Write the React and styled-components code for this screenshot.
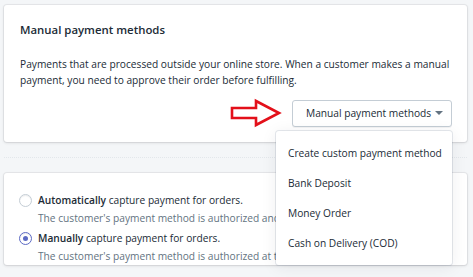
import React from "react";
import styled, { createGlobalStyle } from "styled-components";

const GlobalStyle = createGlobalStyle`
  body {
    margin: 0;
    background: #f4f6f8;
    font-family: "Open Sans", "Noto Sans", sans-serif;
    color: #212b36;
  }
`;

const Page = styled.div`
  width: 473px;
  height: 277px;
  padding: 5px 6px 0 4px;
  box-sizing: border-box;
  overflow: hidden;
`;

const Card = styled.div`
  background: #fff;
  border-radius: 3px;
  box-shadow: 0 0 0 1px rgba(63, 63, 68, 0.07), 0 1px 3px 0 rgba(63, 63, 68, 0.15);
  height: ${(props) => props.height}px;
  box-sizing: border-box;
  padding: ${(props) => props.pad};
`;

const Heading = styled.h2`
  margin: 0;
  font-size: 11.4px;
  font-weight: 600;
  line-height: 18px;
`;

const Text = styled.p`
  margin: 17px 0 0;
  font-size: 10.2px;
  line-height: 16px;
  white-space: nowrap;
`;

const Actions = styled.div`
  display: flex;
  justify-content: flex-end;
  align-items: center;
  gap: 10px;
  margin-top: 10px;
  padding-right: 15px;
`;

const MenuWrap = styled.div`
  position: relative;
`;

const Button = styled.button`
  height: 27px;
  width: 160px;
  padding: 0 8px 0 13px;
  display: flex;
  align-items: center;
  justify-content: space-between;
  background: #fff;
  border: 1px solid #c4cdd5;
  border-radius: 3px;
  box-shadow: 0 1px 0 rgba(22, 29, 37, 0.05);
  font-family: inherit;
  font-size: 10.2px;
  color: #212b36;
  white-space: nowrap;
`;

const Caret = styled.span`
  width: 0;
  height: 0;
  border-left: 4px solid transparent;
  border-right: 4px solid transparent;
  border-top: 4px solid #637381;
`;

const Menu = styled.ul`
  position: absolute;
  top: 31px;
  right: 0;
  width: 176px;
  margin: 0;
  padding: 7px 0;
  list-style: none;
  background: #fff;
  border-radius: 3px;
  box-shadow: 0 0 0 1px rgba(6, 44, 82, 0.1), 0 2px 16px rgba(33, 43, 54, 0.08);
  z-index: 2;
`;

const MenuItem = styled.li`
  height: 30px;
  line-height: 30px;
  padding: 0 12px;
  font-size: 10.2px;
  white-space: nowrap;
`;

const Band = styled.div`
  height: 31px;
  display: flex;
  align-items: center;
`;

const Divider = styled.div`
  flex: 1;
  border-top: 1px dotted #e3e7eb;
`;

const Option = styled.div`
  display: grid;
  grid-template-columns: 13px 1fr;
  column-gap: 6px;
  align-items: center;
  margin-bottom: 2px;
`;

const Radio = styled.span`
  width: 11px;
  height: 11px;
  border-radius: 50%;
  border: 1px solid ${(props) => (props.checked ? "#5c6ac4" : "#c4cdd5")};
  background: #fff;
  box-shadow: inset 0 1px 1px rgba(22, 29, 37, 0.08);
  display: flex;
  align-items: center;
  justify-content: center;
  &::after {
    content: "";
    width: 5px;
    height: 5px;
    border-radius: 50%;
    background: ${(props) => (props.checked ? "#5c6ac4" : "transparent")};
  }
`;

const Label = styled.span`
  font-size: 10.2px;
  line-height: 18px;
  white-space: nowrap;
  b {
    font-weight: 600;
  }
`;

const Help = styled.span`
  grid-column: 2;
  font-size: 10.2px;
  line-height: 18px;
  color: #637381;
  white-space: nowrap;
`;

const Arrow = () => (
  <svg width="52" height="30" viewBox="0 0 52 30">
    <path
      d="M2 10 H26 V3 L49 15 L26 27 V20 H2 Z"
      fill="none"
      stroke="#e3101a"
      strokeWidth="2.6"
      strokeLinejoin="miter"
    />
  </svg>
);

const options = [
  { bold: "Automatically", rest: " capture payment for orders.", help: "The customer's payment method is authorized and charged automatically." },
  { bold: "Manually", rest: " capture payment for orders.", help: "The customer's payment method is authorized at the time of their order.", checked: true },
];

const methods = ["Create custom payment method", "Bank Deposit", "Money Order", "Cash on Delivery (COD)"];

export default function App() {
  return (
    <Page>
      <GlobalStyle />
      <Card height={137} pad="16px 0 0 16px">
        <Heading>Manual payment methods</Heading>
        <Text>
          Payments that are processed outside your online store. When a customer makes a manual
          <br />
          payment, you need to approve their order before fulfilling.
        </Text>
        <Actions>
          <Arrow />
          <MenuWrap>
            <Button>
              Manual payment methods
              <Caret />
            </Button>
            <Menu>
              {methods.map((m) => (
                <MenuItem key={m}>{m}</MenuItem>
              ))}
            </Menu>
          </MenuWrap>
        </Actions>
      </Card>
      <Band>
        <Divider />
      </Band>
      <Card height={92} pad="18px 0 0 15px">
        {options.map((o) => (
          <Option key={o.bold}>
            <Radio checked={o.checked} />
            <Label>
              <b>{o.bold}</b>
              {o.rest}
            </Label>
            <Help>{o.help}</Help>
          </Option>
        ))}
      </Card>
    </Page>
  );
}
